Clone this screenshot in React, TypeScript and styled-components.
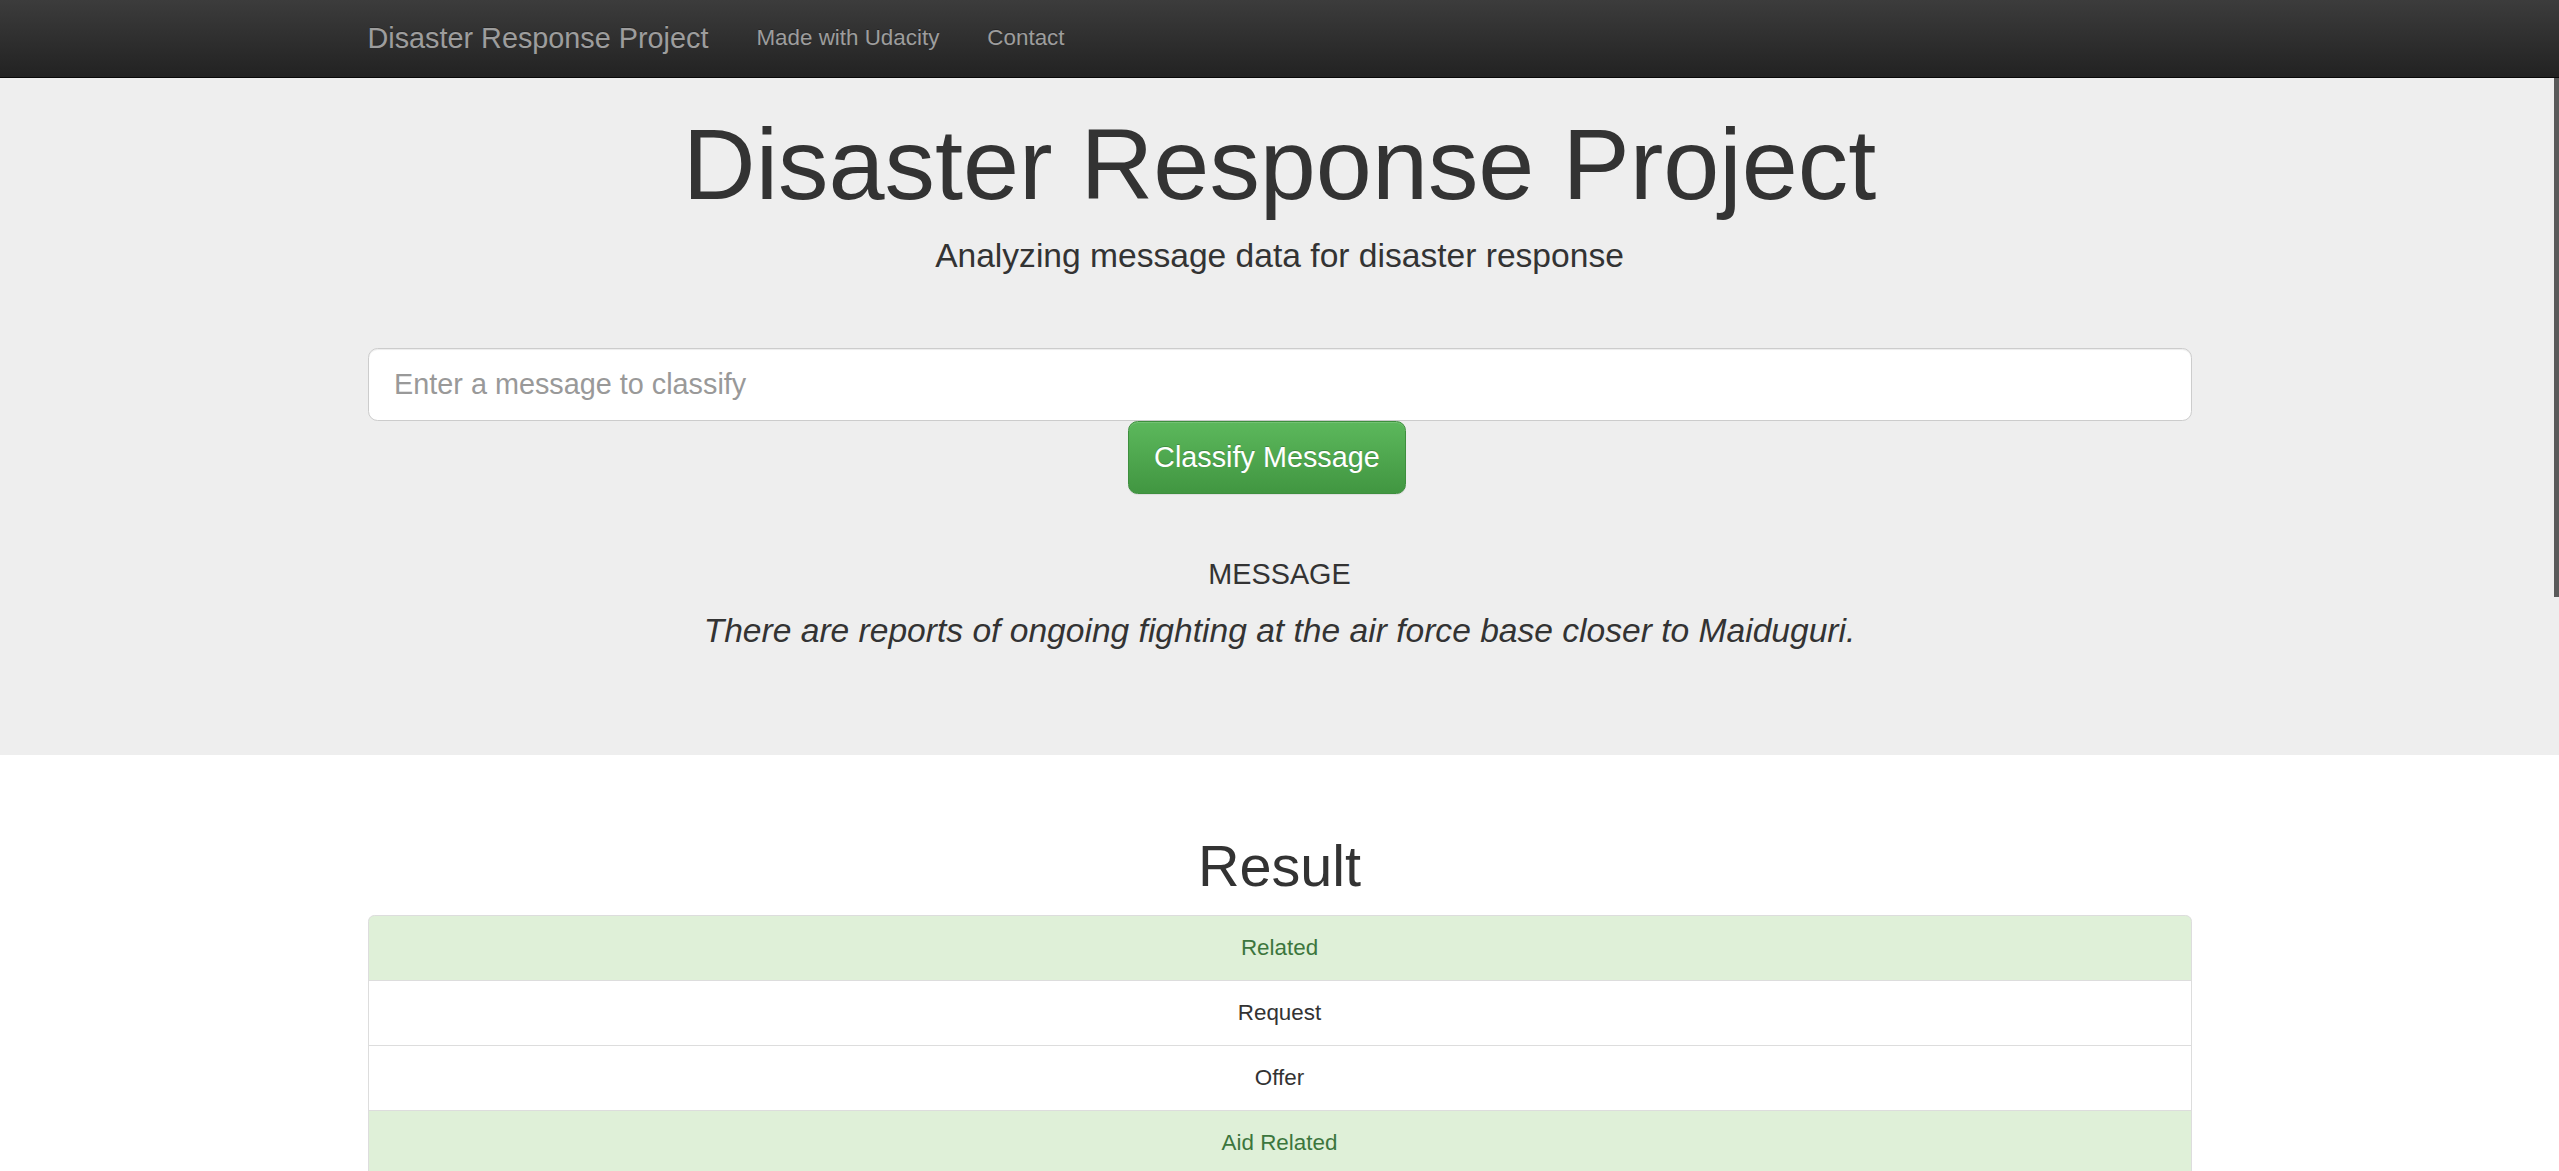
import React from "react";
import styled, { createGlobalStyle } from "styled-components";

const GlobalStyle = createGlobalStyle`
  html, body { margin: 0; padding: 0; }
  body {
    background: #fff;
    color: #333;
    font-family: "Liberation Sans", Arial, Helvetica, sans-serif;
    font-size: 22.4px;
    line-height: 32px;
  }
  * { box-sizing: border-box; }
`;

const Navbar = styled.nav`
  position: fixed;
  top: 0;
  left: 0;
  right: 0;
  z-index: 1030;
  height: 78px;
  background-image: linear-gradient(to bottom, #3c3c3c 0%, #222 100%);
  border-bottom: 1px solid #080808;
`;

const Container = styled.div`
  width: 1872px;
  margin: 0 auto;
  padding: 0 24px;
`;

const NavInner = styled(Container)`
  display: flex;
  align-items: flex-start;
`;

const Brand = styled.a`
  display: block;
  padding: 22px 24px 24px 0;
  font-size: 28.8px;
  line-height: 32px;
  color: #9d9d9d;
  text-decoration: none;
  text-shadow: 0 -1px 0 rgba(0, 0, 0, 0.25);
`;

const NavList = styled.ul`
  display: flex;
  list-style: none;
  margin: 0;
  padding: 0;
`;

const NavLink = styled.a`
  display: block;
  padding: 22px 24px 24px;
  font-size: 22.4px;
  line-height: 32px;
  color: #9d9d9d;
  text-decoration: none;
  text-shadow: 0 -1px 0 rgba(0, 0, 0, 0.25);
`;

const ScrollThumb = styled.div`
  position: fixed;
  top: 0;
  right: 0;
  width: 5px;
  height: 597px;
  background: #5a5a5a;
  z-index: 1000;
`;

const Jumbotron = styled.header`
  background: #eee;
  padding: 76.8px 0;
  margin-bottom: 48px;
`;

const Title = styled.h1`
  margin: 32px 0 12.2px;
  font-size: 100.8px;
  line-height: 1.1;
  font-weight: 500;
  text-align: center;
  color: #333;
`;

const Lead = styled.p`
  margin: 0 0 35px;
  font-size: 33.6px;
  line-height: 48px;
  font-weight: 200;
  text-align: center;
`;

const Rule = styled.hr`
  margin: 32px 0;
  border: 0;
  border-top: 1.6px solid #eee;
  height: 0;
`;

const Form = styled.form`
  display: flex;
  flex-direction: column;
`;

const Input = styled.input`
  display: block;
  width: 100%;
  height: 73.6px;
  padding: 16px 25.6px;
  font-family: inherit;
  font-size: 28.8px;
  line-height: 1.3333;
  color: #555;
  background: #fff;
  border: 1px solid #ccc;
  border-radius: 9.6px;
  box-shadow: inset 0 1px 1px rgba(0, 0, 0, 0.075);
  outline: none;
  &::placeholder { color: #999; }
`;

const ButtonWrap = styled.div`
  margin-left: 41.6667%;
`;

const SuccessButton = styled.button`
  display: inline-block;
  padding: 16px 25.6px;
  font-family: inherit;
  font-size: 28.8px;
  line-height: 1.3333;
  color: #fff;
  background-image: linear-gradient(to bottom, #5cb85c 0%, #419641 100%);
  border: 1px solid #3e8f3e;
  border-radius: 9.6px;
  text-shadow: 0 -1px 0 rgba(0, 0, 0, 0.2);
  box-shadow: inset 0 1px 0 rgba(255, 255, 255, 0.15), 0 1px 1px rgba(0, 0, 0, 0.075);
  cursor: pointer;
`;

const MessageLabel = styled.h4`
  margin: 16px 0;
  font-size: 28.8px;
  line-height: 1.1;
  font-weight: 500;
  text-align: center;
`;

const MessageText = styled.p`
  margin: 0 0 24px;
  font-size: 33.6px;
  line-height: 48px;
  font-weight: 200;
  font-style: italic;
  text-align: center;
`;

const Main = styled(Container)`
  display: flow-root;
`;

const ResultTitle = styled.h1`
  margin: 32px 0 16px;
  font-size: 57.6px;
  line-height: 1.1;
  font-weight: 500;
  text-align: center;
`;

const ListGroup = styled.ul`
  list-style: none;
  margin: 0 0 32px;
  padding: 0;
`;

const ListItem = styled.li<{ $success: boolean }>`
  display: block;
  padding: 16px 24px;
  margin-bottom: -1px;
  border: 1px solid #ddd;
  text-align: center;
  font-size: 22.4px;
  line-height: 32px;
  background: ${(p) => (p.$success ? "#dff0d8" : "#fff")};
  color: ${(p) => (p.$success ? "#3c763d" : "#333")};
  &:first-child {
    border-top-left-radius: 6.4px;
    border-top-right-radius: 6.4px;
  }
  &:last-child {
    margin-bottom: 0;
    border-bottom-left-radius: 6.4px;
    border-bottom-right-radius: 6.4px;
  }
`;

const categories: [string, boolean][] = [
  ["Related", true],
  ["Request", false],
  ["Offer", false],
  ["Aid Related", true],
  ["Medical Help", false],
  ["Medical Products", false],
  ["Search And Rescue", false],
  ["Security", false],
  ["Military", true],
  ["Child Alone", false],
  ["Water", false],
  ["Food", false],
  ["Shelter", false],
  ["Clothing", false],
  ["Money", false],
  ["Missing People", false],
  ["Refugees", false],
  ["Death", false],
  ["Other Aid", false],
  ["Infrastructure Related", false],
  ["Transport", false],
  ["Buildings", false],
  ["Electricity", false],
  ["Tools", false],
  ["Hospitals", false],
  ["Shops", false],
  ["Aid Centers", false],
  ["Other Infrastructure", false],
  ["Weather Related", false],
  ["Floods", false],
  ["Storm", false],
  ["Fire", false],
  ["Earthquake", false],
  ["Cold", false],
  ["Other Weather", false],
  ["Direct Report", false],
];

export default function App() {
  return (
    <>
      <GlobalStyle />
      <Navbar>
        <NavInner>
          <Brand href="#">Disaster Response Project</Brand>
          <NavList>
            <li>
              <NavLink href="#">Made with Udacity</NavLink>
            </li>
            <li>
              <NavLink href="#">Contact</NavLink>
            </li>
          </NavList>
        </NavInner>
      </Navbar>
      <ScrollThumb />
      <Jumbotron>
        <Container>
          <Title>Disaster Response Project</Title>
          <Lead>Analyzing message data for disaster response</Lead>
          <Rule />
          <Form onSubmit={(e) => e.preventDefault()}>
            <Input type="text" name="query" placeholder="Enter a message to classify" />
            <ButtonWrap>
              <SuccessButton type="submit">Classify Message</SuccessButton>
            </ButtonWrap>
          </Form>
          <Rule />
          <MessageLabel>MESSAGE</MessageLabel>
          <MessageText>
            There are reports of ongoing fighting at the air force base closer to Maiduguri.
          </MessageText>
        </Container>
      </Jumbotron>
      <Main>
        <ResultTitle>Result</ResultTitle>
        <ListGroup>
          {categories.map(([name, ok]) => (
            <ListItem key={name} $success={ok}>
              {name}
            </ListItem>
          ))}
        </ListGroup>
      </Main>
    </>
  );
}
